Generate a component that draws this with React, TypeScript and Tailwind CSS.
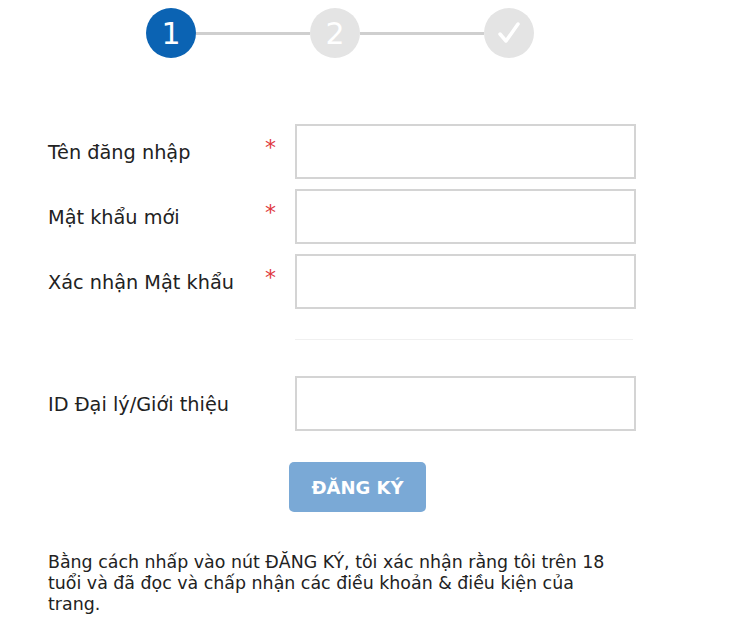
const font = { fontFamily: '"DejaVu Sans", sans-serif' };

function Step({ active, children }: { active?: boolean; children: React.ReactNode }) {
  return (
    <div
      className={
        "flex h-[50px] w-[50px] shrink-0 items-center justify-center rounded-full text-[30px] text-white " +
        (active ? "bg-[#0b63b3]" : "bg-[#e4e4e4]")
      }
    >
      {children}
    </div>
  );
}

function Row({ label, required }: { label: string; required?: boolean }) {
  return (
    <div className="flex items-start pl-[48px]">
      <div className="w-[214px] shrink-0 whitespace-nowrap pt-[17px] text-[19.3px] leading-[24px] text-[#222]">{label}</div>
      <div className="w-[33px] shrink-0 pl-[3px] pt-[12px] text-[22px] leading-[24px] text-[#e0393e]">{required ? "*" : ""}</div>
      <input className="h-[55px] w-[341px] shrink-0 border-2 border-[#d4d4d4] bg-white outline-none" />
    </div>
  );
}

export default function App() {
  return (
    <div className="min-h-[636px] w-[750px] bg-white" style={font}>
      <div className="flex items-center pt-[8px] pl-[146px]">
        <Step active>1</Step>
        <div className="h-[3px] w-[114px] bg-[#cfcfcf]" />
        <Step>2</Step>
        <div className="h-[3px] w-[124px] bg-[#cfcfcf]" />
        <Step>
          <svg width="26" height="26" viewBox="0 0 26 26" fill="none">
            <path d="M4 14l6 7L22 4" stroke="white" strokeWidth="3.5" strokeLinecap="round" strokeLinejoin="round" />
          </svg>
        </Step>
      </div>

      <div className="mt-[66px] flex flex-col gap-[10px]">
        <Row label="Tên đăng nhập" required />
        <Row label="Mật khẩu mới" required />
        <Row label="Xác nhận Mật khẩu" required />
      </div>

      <div className="mt-[30px] ml-[295px] h-px w-[338px] bg-[#f0f0f0]" />

      <div className="mt-[36px]">
        <Row label="ID Đại lý/Giới thiệu" />
      </div>

      <div className="mt-[31px] pl-[289px]">
        <button className="h-[50px] w-[137px] rounded-[5px] bg-[#7aa9d6] text-[18px] font-bold text-white">
          ĐĂNG KÝ
        </button>
      </div>

      <p className="mt-[40px] pl-[48px] text-[17.4px] leading-[21px] text-[#222]">
        Bằng cách nhấp vào nút ĐĂNG KÝ, tôi xác nhận rằng tôi trên 18
        <br />
        tuổi và đã đọc và chấp nhận các điều khoản &amp; điều kiện của
        <br />
        trang.
      </p>
    </div>
  );
}
